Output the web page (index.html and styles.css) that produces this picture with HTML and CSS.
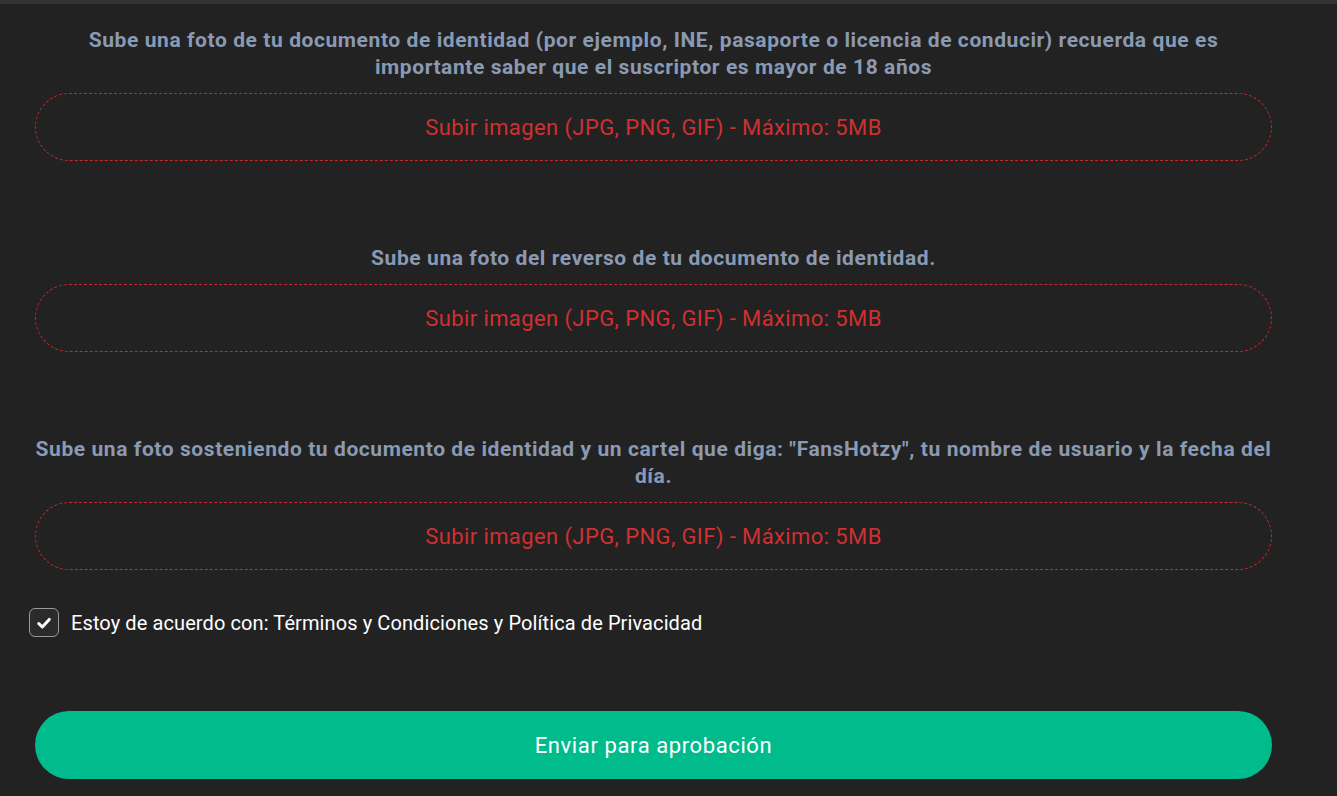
FILE: index.html
```html
<!DOCTYPE html>
<html lang="es">
<head>
<meta charset="utf-8">
<title>Verificación</title>
<link rel="stylesheet" href="styles.css">
</head>
<body>
<div class="topbar"></div>
<main class="form">
  <section class="group first">
    <p class="label">Sube una foto de tu documento de identidad (por ejemplo, INE, pasaporte o licencia de conducir) recuerda que es importante saber que el suscriptor es mayor de 18 años</p>
    <div class="upload">Subir imagen (JPG, PNG, GIF) - Máximo: 5MB</div>
  </section>
  <section class="group">
    <p class="label">Sube una foto del reverso de tu documento de identidad.</p>
    <div class="upload">Subir imagen (JPG, PNG, GIF) - Máximo: 5MB</div>
  </section>
  <section class="group">
    <p class="label">Sube una foto sosteniendo tu documento de identidad y un cartel que diga: "FansHotzy", tu nombre de usuario y la fecha del día.</p>
    <div class="upload">Subir imagen (JPG, PNG, GIF) - Máximo: 5MB</div>
  </section>
  <label class="agree">
    <span class="check"><svg viewBox="0 0 16 16" width="16" height="16"><path d="M2.8 8.6 L6.3 12 L13.3 4.4" fill="none" stroke="#fff" stroke-width="3" stroke-linecap="round" stroke-linejoin="round"/></svg></span>
    <span class="agree-text">Estoy de acuerdo con: Términos y Condiciones y Política de Privacidad</span>
  </label>
  <button class="submit" type="button">Enviar para aprobación</button>
</main>
</body>
</html>
```
FILE: styles.css
```css
html, body {
  margin: 0;
  padding: 0;
  background: #222222;
  font-family: Roboto, "Liberation Sans", sans-serif;
  height: 796px;
  overflow: hidden;
}
.topbar {
  height: 4px;
  background: #333333;
}
.form {
  width: 1237px;
  margin-left: 35px;
  display: flex;
  flex-direction: column;
}
.group {
  display: flex;
  flex-direction: column;
  margin-top: 84px;
}
.group.first {
  margin-top: 23px;
}
.label {
  margin: 0 0 12px;
  text-align: center;
  color: #8a9ab3;
  font-weight: 700;
  font-size: 21px;
  line-height: 27px;
  letter-spacing: 0.58px;
}
.upload {
  box-sizing: border-box;
  height: 68px;
  border: 1px dashed #c62a2a;
  border-radius: 34px;
  display: flex;
  align-items: center;
  justify-content: center;
  color: #d03030;
  font-size: 22px;
  letter-spacing: 0.4px;
}
.agree {
  display: flex;
  align-items: center;
  gap: 12px;
  margin: 38px 0 0 -6px;
}
.check {
  box-sizing: border-box;
  width: 30px;
  height: 29px;
  border: 1px solid #9a9a9a;
  border-radius: 6px;
  background: #2b2b2b;
  display: flex;
  align-items: center;
  justify-content: center;
}
.agree-text {
  color: #ffffff;
  font-size: 20px;
  letter-spacing: 0.1px;
}
.submit {
  margin-top: 74px;
  height: 68px;
  border: none;
  border-radius: 34px;
  background: #00bc8c;
  color: #ffffff;
  font-family: Roboto, "Liberation Sans", sans-serif;
  font-size: 22px;
  letter-spacing: 0.6px;
}
```
